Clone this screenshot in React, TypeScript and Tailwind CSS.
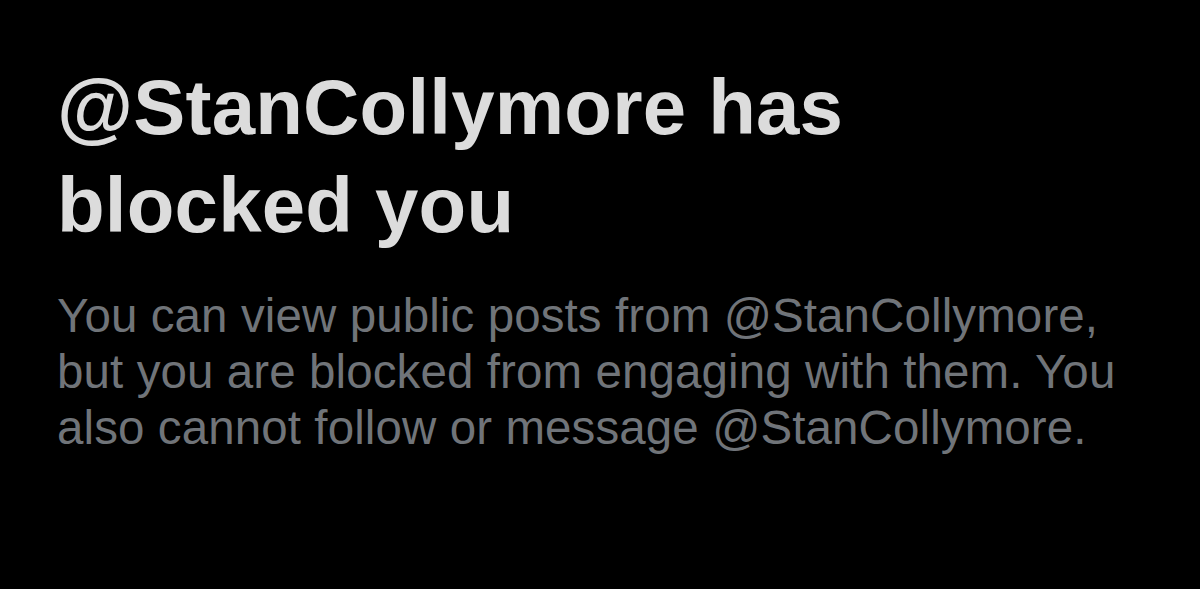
export default function App() {
  return (
    <div className="w-[1200px] h-[589px] bg-black overflow-hidden" style={{ fontFamily: '"Liberation Sans", Arial, sans-serif' }}>
      <div className="pl-[57px] pt-[58px]">
        <h1 className="text-[78px] leading-[98px] font-bold text-[#dcdcdc] tracking-[0.2px]">
          @StanCollymore has
          <br />
          blocked you
        </h1>
        <p className="mt-[34px] text-[47.5px] leading-[56px] text-[#707479] tracking-[0.1px]">
          You can view public posts from @StanCollymore,
          <br />
          but you are blocked from engaging with them. You
          <br />
          also cannot follow or message @StanCollymore.
        </p>
      </div>
    </div>
  );
}
